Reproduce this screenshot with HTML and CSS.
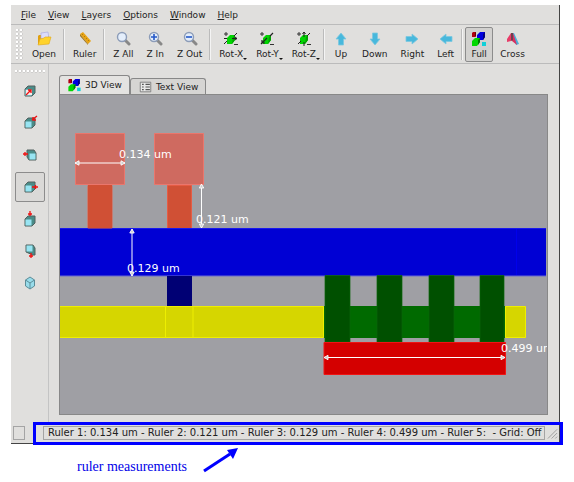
FILE: index.html
```html
<!DOCTYPE html>
<html lang="en">
<head>
<meta charset="utf-8">
<title>3D View</title>
<link rel="stylesheet" href="styles.css">
</head>
<body>
<svg class="defs" aria-hidden="true">
  <symbol id="blocks" viewBox="0 0 16 16">
    <path d="M1 2l1-1h3v4L4 6H1z" fill="#b00010"/><path d="M4 2l1-1v4L4 6z" fill="#600"/>
    <path d="M6 4l3-3h5v5l-2 3H6z" fill="#0000e0"/><path d="M12 3l2-2v5l-2 3z" fill="#000080"/>
    <path d="M1 10l3-3h5v4l-3 4H1z" fill="#00d800"/><path d="M7 9l2-2v4l-2 3z" fill="#007800"/>
    <path d="M11 11h4v4h-4z" fill="#10d0d8"/>
  </symbol>
  <symbol id="lens" viewBox="0 0 16 16">
    <path d="M10 9l4 4" stroke="#888" stroke-width="3" stroke-linecap="round"/>
    <circle cx="7" cy="6" r="4.5" fill="#e4eefb" stroke="#8c9cb8" stroke-width="1.4"/>
  </symbol>
  <symbol id="arrow" viewBox="0 0 16 16">
    <path d="M8 2l5 6h-2.500v6h-5V8H3z" fill="#48b8dc" stroke="#7cc8e0" stroke-width=".8"/>
  </symbol>
  <symbol id="rot" viewBox="0 0 16 16">
    <path d="M4 7l3-3h5v5l-3 4H4z" fill="#00d400"/><path d="M10 6l2-2v5l-3 4z" fill="#00a000"/>
    <path d="M1 3h4M3 1v4M11 13.500h4" stroke="#333"/>
  </symbol>
  <symbol id="cube" viewBox="0 0 16 16">
    <path d="M3 6l3-3h7v7l-3 3H3z" fill="#4a8c88" stroke="#52615f"/>
    <path d="M3.500 6.500h6v6h-6z" fill="#98e4f2"/>
  </symbol>
</svg>

<div class="window">
  <nav class="menubar">
    <button><u>F</u>ile</button><button><u>V</u>iew</button><button><u>L</u>ayers</button><button><u>O</u>ptions</button><button><u>W</u>indow</button><button><u>H</u>elp</button>
  </nav>

  <div class="toolbar">
    <span class="grip"></span>
    <button class="tool"><svg viewBox="0 0 16 16"><path d="M2 5l1-1h3l1 1h6v8H2z" fill="#e0a010"/><path d="M5 2l7-1 1 7H5z" fill="#dcdcfa" stroke="#a4a4dc" stroke-width=".6"/><path d="M4 8l4-1 1-1h6l-2 7-11 1z" fill="#ffd32c" stroke="#e0a818" stroke-width=".6"/></svg>Open</button>
    <i class="sep"></i>
    <button class="tool"><svg viewBox="0 0 16 16"><path d="M3 3l3-2 8 9-3 3z" fill="#e8a414"/><path d="M3 3l8 10v1L3 5z" fill="#9c7420"/><path d="M6 3L5 4M8 5L7 6M10 7L9 8M12 9l-1 1" stroke="#8a6010" stroke-width=".6"/></svg>Ruler</button>
    <i class="sep"></i>
    <button class="tool"><svg><use href="#lens"/></svg>Z All</button>
    <button class="tool"><svg viewBox="0 0 16 16"><use href="#lens"/><path d="M4 6h6M7 3v6" stroke="#2458c8" stroke-width="1.6"/></svg>Z In</button>
    <button class="tool"><svg viewBox="0 0 16 16"><use href="#lens"/><path d="M4 6h6" stroke="#2458c8" stroke-width="1.6"/></svg>Z Out</button>
    <i class="sep"></i>
    <button class="tool drop"><svg viewBox="0 0 16 16"><use href="#rot"/><path d="M1 13l3-3M11 5l3-3M9 7.500h5M12 6l2 1.500L12 9M1 7.500h3" fill="none" stroke="#222"/></svg>Rot-X</button>
    <button class="tool drop"><svg viewBox="0 0 16 16"><use href="#rot"/><path d="M2 13l6-6M11 5l3-3M3 9v3h3" fill="none" stroke="#222" stroke-width="1.200"/></svg>Rot-Y</button>
    <button class="tool drop"><svg viewBox="0 0 16 16"><use href="#rot"/><path d="M2 13l3-3M11 5l3-3M8 1v5M8 11v4M6.500 3L8 1l1.500 2" fill="none" stroke="#222"/></svg>Rot-Z</button>
    <i class="sep"></i>
    <button class="tool"><svg><use href="#arrow"/></svg>Up</button>
    <button class="tool"><svg class="down"><use href="#arrow"/></svg>Down</button>
    <button class="tool"><svg class="right"><use href="#arrow"/></svg>Right</button>
    <button class="tool"><svg class="left"><use href="#arrow"/></svg>Left</button>
    <i class="sep"></i>
    <button class="tool on" aria-pressed="true"><svg><use href="#blocks"/></svg>Full</button>
    <button class="tool"><svg viewBox="0 0 16 16"><path d="M8 2h2l5 11-3 1z" fill="#48b0d8"/><path d="M7 2h2l4 12-5-4z" fill="#d83060"/><path d="M7 2L3 8v3l4-1z" fill="#e83c68"/><path d="M7 2v8l2-1V2z" fill="#70404c"/></svg>Cross</button>
  </div>

  <div class="work">
    <div class="side">
      <span class="grip flat"></span>
      <button aria-label="Front"><svg viewBox="0 0 16 16"><use href="#cube"/><path d="M4 7h6v5H4z" fill="#f4ecec"/><path d="M4 12l5-5M6 7h3v3" fill="none" stroke="#f01010" stroke-width="1.300"/></svg></button>
      <button aria-label="Back"><svg viewBox="0 0 16 16"><use href="#cube"/><path d="M10 5l5-4M11 2v3h3" fill="none" stroke="#f01010" stroke-width="1.300"/></svg></button>
      <button aria-label="Left side"><svg viewBox="0 0 16 16"><path d="M5 3h7l2 3v7H7l-2-3z" fill="#4a8c88" stroke="#52615f"/><path d="M7.500 6.500h6v6h-6z" fill="#98e4f2"/><path d="M1 7h5M3 5v4" stroke="#f01010" stroke-width="1.300"/></svg></button>
      <button class="on" aria-label="Right side" aria-pressed="true"><svg viewBox="0 0 16 16"><use href="#cube"/><path d="M10 8h6M13.500 6v4" stroke="#f01010" stroke-width="1.300"/></svg></button>
      <button aria-label="Top"><svg viewBox="0 0 16 16"><use href="#cube" y="2" width="16" height="16"/><path d="M8 0v5M6 3h4" stroke="#f01010" stroke-width="1.300"/></svg></button>
      <button aria-label="Bottom"><svg viewBox="0 0 16 16"><path d="M4 2h7l2 3v7h-2l-7-3z" fill="#4a8c88" stroke="#52615f"/><path d="M4.500 2.500h6v6h-6z" fill="#98e4f2"/><path d="M9 10v5M7 13h4" stroke="#f01010" stroke-width="1.300"/></svg></button>
      <button aria-label="Isometric"><svg viewBox="0 0 16 16"><path d="M8 2l4.500 3v6L8 14l-4.500-3V5z" fill="#98dcea" stroke="#5c8c98"/><path d="M3.500 5L8 8l4.500-3M8 8v6" fill="none" stroke="#5c8c98"/></svg></button>
    </div>

    <main class="main">
      <div class="tabs">
        <button class="tab on"><svg><use href="#blocks"/></svg>3D View</button>
        <button class="tab"><svg viewBox="0 0 16 16"><path d="M2 2.500h12v11H2z" fill="#e8e8e8" stroke="#777"/><path d="M4 5h2M4 8h2M4 11h2M8 5h5M8 8h5M8 11h5" stroke="#555" stroke-width="1.200"/></svg>Text View</button>
      </div>
      <div class="canvas">
        <svg class="scene" viewBox="60 95 487 319" role="img" aria-label="Layer cross section">
          <defs>
            <marker id="tip" viewBox="0 0 6 6" refX="5" refY="3" markerWidth="6" markerHeight="6" orient="auto-start-reverse"><path d="M1 .8L5 3 1 5.200z" fill="#ccc" stroke="#fff" stroke-width=".9"/></marker>
          </defs>
          <g fill="#cf6a60" stroke="#ea766c"><path d="M75.500 133.500h49v51h-49zM154.500 133.500h49v51h-49z"/></g>
          <g fill="#d05035" stroke="#e65c44"><path d="M88 185.500h24v43H88zM167.500 185.500h24v43h-24z"/></g>
          <path d="M60 228h486v48H60z" fill="#0000d4"/>
          <path d="M60 228.500h486" stroke="#1818ec"/><path d="M60 276h486" stroke="#6868d0"/>
          <path d="M516.500 229v46" stroke="#0000ec"/>
          <path d="M88 185h24v43.500H88z" fill="#d05035"/>
          <path d="M167 276h25v30h-25z" fill="#000074"/>
          <path d="M59.500 306.500h264v31h-264zM505.500 306.500h20v31h-20z" fill="#d6d600" stroke="#eeee00"/>
          <path d="M165.500 307v30M193 307v30" stroke="#eeee00"/>
          <path d="M324 306h181v32H324z" fill="#006a00"/>
          <path d="M325 275.500h25V342h-25zM377 275.500h25V342h-25zM429 275.500h25V342h-25zM480 275.500h24V342h-24z" fill="#005000" stroke="#0a660a" stroke-width=".7"/>
          <path d="M324 342.500h181.500v32H324z" fill="#d40000" stroke="#f01414"/>
          <g class="rulers">
            <path d="M75 163h50"/>
            <path d="M201.500 184v44"/>
            <path d="M132 229v47"/>
            <path d="M324 357.500h181"/>
          </g>
          <text x="119" y="158">0.134 um</text>
          <text x="196" y="223">0.121 um</text>
          <text x="127" y="272">0.129 um</text>
          <text x="501" y="352">0.499 um</text>
        </svg>
      </div>
    </main>
  </div>

  <footer class="status">
    <span class="cell small"></span>
    <span class="cell">Ruler 1: 0.134 um - Ruler 2: 0.121 um - Ruler 3: 0.129 um - Ruler 4: 0.499 um - Ruler 5:&nbsp; - Grid: Off</span>
    <svg class="resize" viewBox="0 0 12 12"><path d="M1 12L11 2M5 12l6-6M9 12l2-2" stroke="#999"/></svg>
    <div class="callout"></div>
  </footer>
</div>

<div class="note">
  <span>ruler measurements</span>
  <svg viewBox="0 0 36 26"><path d="M1 24L27 7" stroke="#00f" stroke-width="3"/><path d="M35 1L30 12 24 3z" fill="#00f"/></svg>
</div>
</body>
</html>
```

FILE: styles.css
```css
* { box-sizing: border-box; }

body {
  margin: 0;
  padding: 5px 14px 0 11px;
  background: #fff;
  font: 9px/12px "DejaVu Sans", sans-serif;
  color: #222;
}

.defs { display: none; }

svg { display: block; }

button {
  margin: 0;
  padding: 0;
  border: 1px solid transparent;
  background: none;
  font: inherit;
  color: inherit;
}

.window {
  background: #e0dfdd;
  border-right: 1px solid #444;
  border-bottom: 1px solid #444;
}

.menubar {
  display: flex;
  padding: 3px 4px 2px;
  border-bottom: 1px solid #bbb;
}

.menubar button { padding: 0 5px; height: 14px; }

.toolbar {
  display: flex;
  gap: 1px;
  height: 39px;
  padding: 2px 0 1px 5px;
  border-bottom: 1px solid #bbb;
}

.grip {
  flex: none;
  width: 7px;
  margin: 2px 2px 2px 0;
  background: radial-gradient(circle at 1px 1px, #fff 1px, #b8b8b8 1px, transparent 2px) 0 0 / 4px 4px;
}

.grip.flat { width: 30px; height: 4px; margin: 0; }

.tool {
  position: relative;
  display: flex;
  flex: none;
  flex-direction: column;
  align-items: center;
  gap: 1px;
  padding: 3px 5px 0;
  border-radius: 2px;
}

.tool svg { width: 16px; height: 16px; }

.on { border-color: #8c8c8c; background: #d2d1cf; }

.down { transform: rotate(180deg); }
.right { transform: rotate(90deg); }
.left { transform: rotate(270deg); }

.drop::after {
  content: "";
  position: absolute;
  right: 1px;
  bottom: 1px;
  border: 2px solid transparent;
  border-top-color: #111;
  border-bottom: 0;
}

.sep {
  flex: none;
  width: 2px;
  margin: 2px 1px 2px 0;
  border-left: 1px solid #bbb;
  border-right: 1px solid #f4f4f4;
}

.work { display: flex; }

.side {
  display: flex;
  flex-direction: column;
  gap: 2px;
  width: 38px;
  padding: 6px 3px 0 4px;
  border-right: 1px solid #c4c4c4;
}

.side button {
  display: grid;
  place-items: center;
  height: 30px;
  border-radius: 2px;
}

.side button svg { width: 16px; height: 16px; }

.side .on { border-color: #8c8c8c; background: #dad9d7; }

.main { flex: 1; min-width: 0; padding: 11px 11px 8px 10px; }

.tabs { display: flex; align-items: flex-end; }

.tab {
  display: flex;
  align-items: center;
  gap: 3px;
  height: 16px;
  padding: 0 7px;
  border: 1px solid #888;
  border-bottom: 0;
  border-radius: 3px 3px 0 0;
  background: #d6d5d3;
}

.tab.on { height: 19px; background: #e4e3e1; }

.tab svg { width: 15px; height: 14px; }

.canvas { border: 1px solid #888; background: #9f9fa4; }

.scene { width: 100%; }

.scene text { font: 11px "DejaVu Sans", sans-serif; fill: #fff; }

.rulers path {
  stroke: #fff;
  marker-start: url(#tip);
  marker-end: url(#tip);
}

.status {
  position: relative;
  display: flex;
  align-items: center;
  gap: 2px;
  height: 20px;
  padding: 0 1px 0 2px;
}

.cell {
  height: 14px;
  padding: 0 2px 0 4px;
  border: 1px solid #a4a4a4;
  font-size: 10px;
  white-space: pre;
}

.cell.small { width: 12px; margin-right: 16px; }

.resize { flex: none; width: 11px; height: 12px; margin-left: auto; }

.callout {
  position: absolute;
  inset: -1px -4px -2px 22px;
  border: 3px solid #00f;
}

.note {
  display: flex;
  gap: 16px;
  padding: 3px 0 0 66px;
  color: #0000e8;
  font: 14px/18px "Liberation Serif", serif;
}

.note span { padding-top: 11px; }

.note svg { width: 36px; height: 26px; }
```
